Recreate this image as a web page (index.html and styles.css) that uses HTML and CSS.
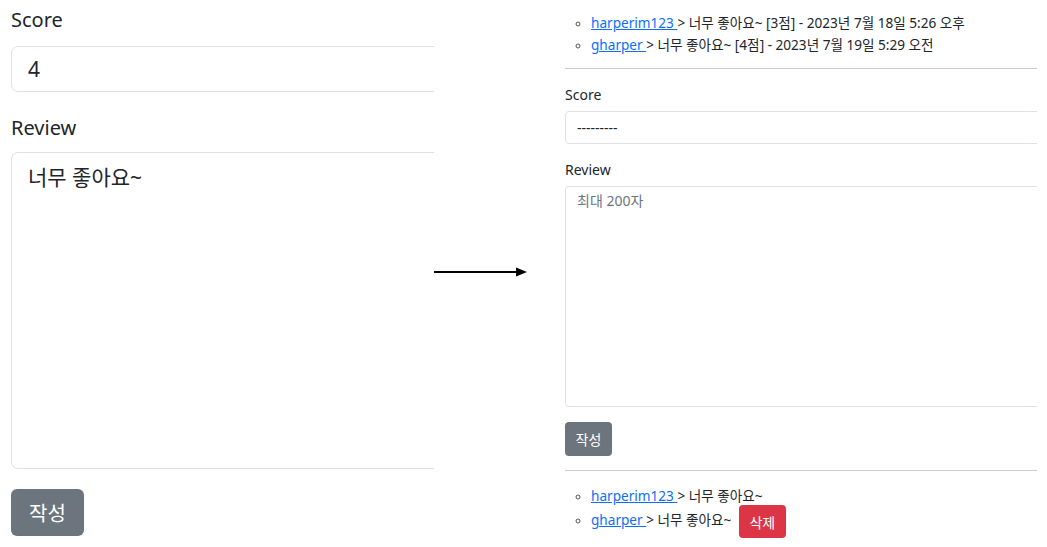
FILE: index.html
```html
<!DOCTYPE html>
<html lang="ko">
<head>
<meta charset="utf-8">
<link rel="stylesheet" href="styles.css">
</head>
<body>
<div class="stage">
  <section class="panel panel-left">
    <form class="form-big">
      <label class="big-label">Score</label>
      <div class="big-input">4</div>
      <label class="big-label big-label-review">Review</label>
      <div class="big-textarea">너무 좋아요~</div>
      <button type="button" class="big-btn">작성</button>
    </form>
  </section>
  <div class="arrow">
    <svg width="94" height="12" viewBox="0 0 94 12"><line x1="0" y1="6" x2="84" y2="6" stroke="#000" stroke-width="2.2"/><polygon points="82,1.5 93,6 82,10.5" fill="#000"/></svg>
  </div>
  <section class="panel panel-right">
    <ul class="reviews reviews-top">
      <li><a href="#">harperim123 </a> &gt; 너무 좋아요~ [3점] - 2023년 7월 18일 5:26 오후</li>
      <li><a href="#">gharper </a> &gt; 너무 좋아요~ [4점] - 2023년 7월 19일 5:29 오전</li>
    </ul>
    <hr class="rule rule-top">
    <form class="form-small">
      <label class="small-label">Score</label>
      <div class="small-select">---------</div>
      <label class="small-label small-label-review">Review</label>
      <div class="small-textarea">최대 200자</div>
      <button type="button" class="small-btn">작성</button>
    </form>
    <hr class="rule rule-bottom">
    <ul class="reviews reviews-bottom">
      <li><a href="#">harperim123 </a> &gt; 너무 좋아요~</li>
      <li><a href="#">gharper </a> &gt; 너무 좋아요~ <button type="button" class="del-btn">삭제</button></li>
    </ul>
  </section>
</div>
</body>
</html>
```

FILE: styles.css
```css
* { box-sizing: border-box; }
html, body { margin: 0; padding: 0; background: #fff; }
body {
  font-family: "Noto Sans", "Noto Sans CJK KR", sans-serif;
  color: #212529;
}
.stage {
  display: flex;
  width: 1047px;
  height: 547px;
  overflow: hidden;
}
.panel { overflow: hidden; flex: none; }
.panel-left { width: 434px; padding-left: 11px; }
.form-big { width: 800px; display: flex; flex-direction: column; align-items: flex-start; }
.big-label {
  font-size: 20px;
  line-height: 30px;
  margin-top: 5px;
  margin-bottom: 11px;
  color: #212529;
}
.big-label-review { margin-top: 21px; margin-bottom: 9px; }
.big-input {
  width: 800px;
  height: 46px;
  border: 1px solid #dee2e6;
  border-radius: 7px;
  padding: 0 16px;
  font-size: 21px;
  line-height: 44px;
}
.big-textarea {
  width: 800px;
  height: 317px;
  border: 1px solid #dee2e6;
  border-radius: 7px;
  padding: 8px 16px;
  font-size: 21px;
  line-height: 32px;
}
.big-btn {
  margin-top: 20px;
  width: 73px;
  height: 47px;
  border: none;
  border-radius: 6px;
  background: #6c757d;
  color: #fff;
  font-family: inherit;
  font-size: 20px;
  padding: 0;
}
.arrow {
  width: 121px;
  flex: none;
  padding-top: 266px;
}
.arrow svg { display: block; }
.panel-right { width: 482px; padding-left: 10px; }
.reviews {
  margin: 0;
  padding-left: 26px;
  list-style: circle;
  font-size: 13.6px;
  line-height: 22px;
}
.reviews li::marker { color: #555; font-size: 12px; }
.reviews a { color: #0d6efd; text-decoration: underline; }
.reviews-top { margin-top: 12px; }
.rule {
  border: none;
  border-top: 1px solid #ccc;
  margin: 12px 0 0;
  width: 700px;
}
.form-small { width: 800px; display: flex; flex-direction: column; align-items: flex-start; }
.small-label {
  font-size: 14px;
  line-height: 21px;
  margin-top: 15px;
  margin-bottom: 6px;
}
.small-label-review { margin-top: 15px; margin-bottom: 6px; }
.small-select {
  width: 800px;
  height: 33px;
  border: 1px solid #dee2e6;
  border-radius: 4px;
  padding: 0 11px;
  font-size: 14px;
  line-height: 31px;
}
.small-textarea {
  width: 800px;
  height: 221px;
  border: 1px solid #dee2e6;
  border-radius: 4px;
  padding: 3px 11px;
  font-size: 14px;
  line-height: 21px;
  color: #6c757d;
}
.small-btn {
  margin-top: 15px;
  width: 47px;
  height: 34px;
  border: none;
  border-radius: 4px;
  background: #6c757d;
  color: #fff;
  font-family: inherit;
  font-size: 14px;
  padding: 0;
}
.rule-bottom { margin-top: 14px; }
.reviews-bottom { margin-top: 14px; }
.del-btn {
  display: inline-block;
  vertical-align: middle;
  margin: -2px 0 -2px 4px;
  width: 47px;
  height: 33px;
  border: none;
  border-radius: 4px;
  background: #dc3545;
  color: #fff;
  font-family: inherit;
  font-size: 14px;
  padding: 0;
}
```
